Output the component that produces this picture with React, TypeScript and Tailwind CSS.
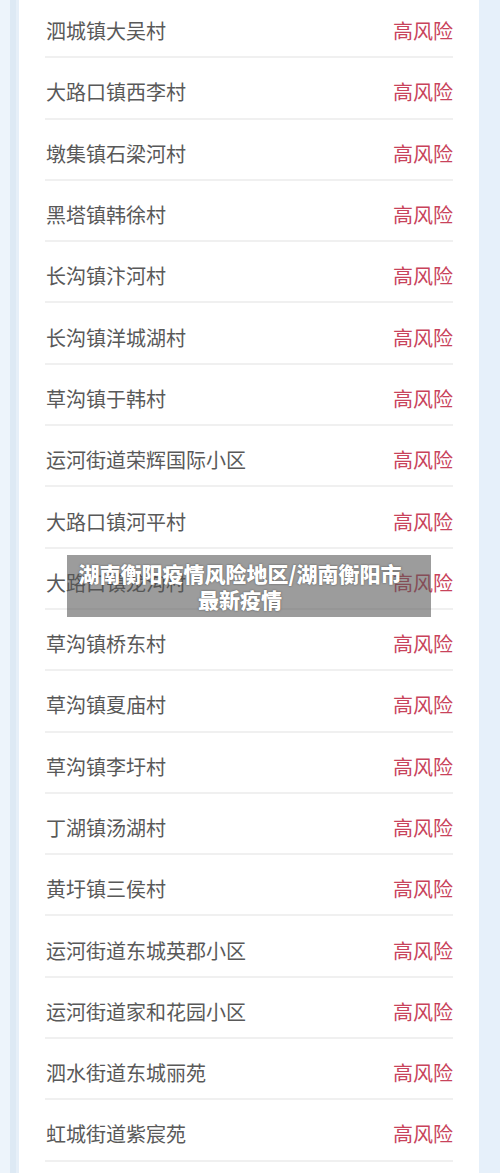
import React from "react";

const rows = [
  "泗城镇大吴村",
  "大路口镇西李村",
  "墩集镇石梁河村",
  "黑塔镇韩徐村",
  "长沟镇汴河村",
  "长沟镇洋城湖村",
  "草沟镇于韩村",
  "运河街道荣辉国际小区",
  "大路口镇河平村",
  "大路口镇龙沟村",
  "草沟镇桥东村",
  "草沟镇夏庙村",
  "草沟镇李圩村",
  "丁湖镇汤湖村",
  "黄圩镇三侯村",
  "运河街道东城英郡小区",
  "运河街道家和花园小区",
  "泗水街道东城丽苑",
  "虹城街道紫宸苑",
];

export default function App() {
  return (
    <div
      className="relative w-[500px] h-[1173px] overflow-hidden bg-[#e9f2fa] flex"
      style={{ fontFamily: '"Noto Sans CJK SC", "Noto Sans", sans-serif' }}
    >
      <div className="w-[19px] shrink-0 flex">
        <div className="w-[10px] bg-[#edf4fb]" />
        <div className="w-[6px] bg-[#dde9f4]" />
        <div className="w-[3px] bg-[#e6eff8]" />
      </div>
      <div className="w-[460px] shrink-0 bg-white px-[26px]">
        <div className="-mt-[3px] flex flex-col">
          {rows.map((r, i) => (
            <div
              key={i}
              className="h-[61.3px] shrink-0 flex items-center justify-between pt-[9px] border-b-2 border-[#f0f0f0]"
            >
              <span className="text-[20px] leading-none text-[#595959] pl-[1px]">{r}</span>
              <span className="text-[20px] leading-none text-[#c8435b]">高风险</span>
            </div>
          ))}
        </div>
      </div>
      <div className="flex-1 bg-[#e6f0fa]" />
      <div className="absolute left-[67px] top-[555px] w-[364px] h-[62px] bg-[rgba(85,85,85,0.58)] flex flex-col items-center justify-center pr-[18px]">
        <div className="text-white font-black text-[21px] leading-[26px] text-center [text-shadow:0_0_2px_rgba(0,0,0,0.5)] whitespace-nowrap">
          湖南衡阳疫情风险地区/湖南衡阳市
          <br />
          最新疫情
        </div>
      </div>
    </div>
  );
}
